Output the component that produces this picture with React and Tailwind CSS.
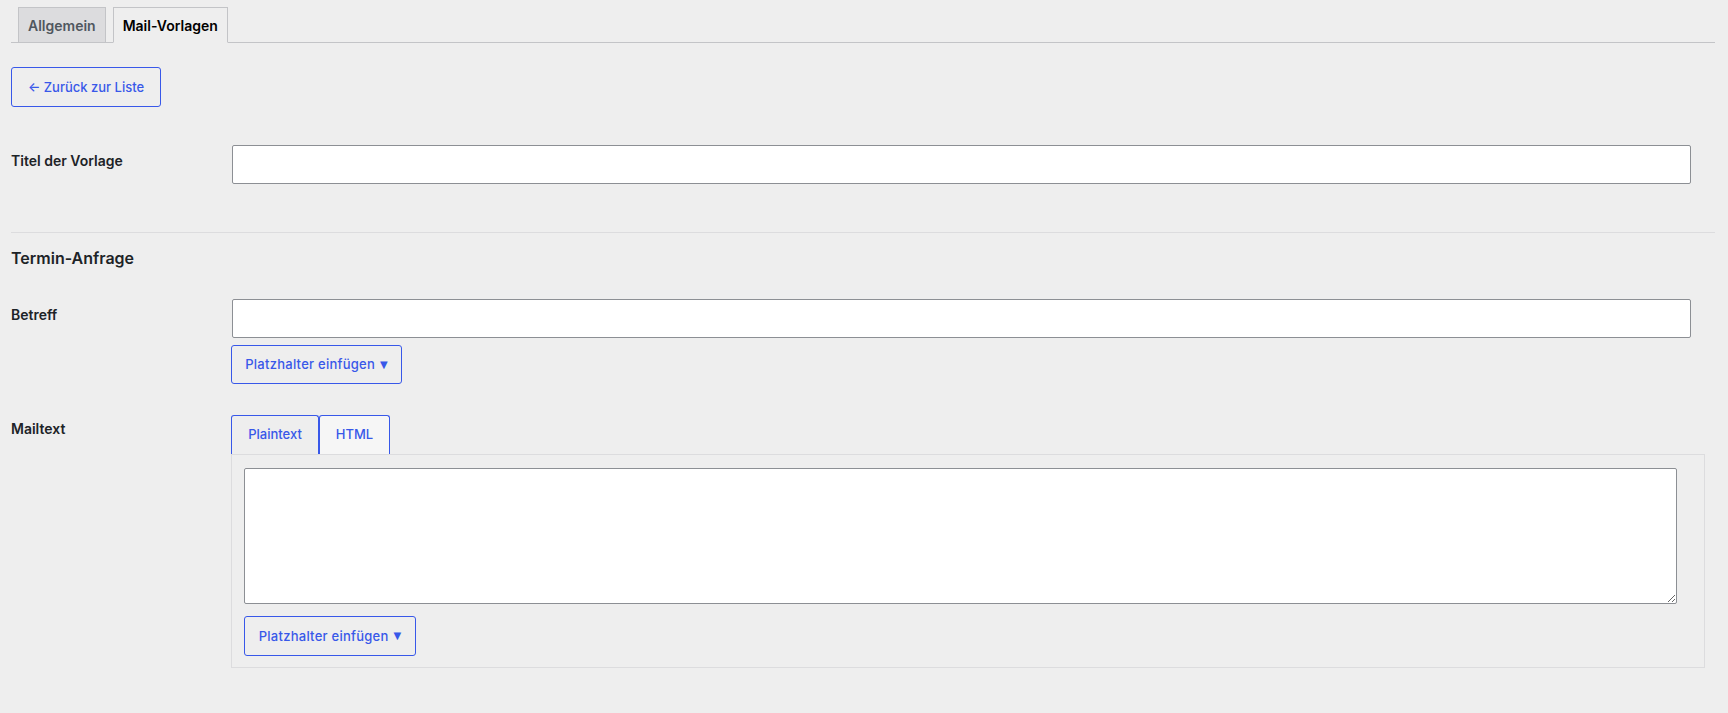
import React from "react";

const blueBtn =
  "flex items-center justify-center border border-[#3858e9] rounded-[3px] text-[#3858e9] text-[13px] font-medium leading-none";

function Row({ label, labelPt, children, className = "" }) {
  return (
    <div className={`flex ${className}`}>
      <div className={`w-[220px] shrink-0 text-[14px] font-semibold leading-[18px] text-[#1d2327] ${labelPt}`}>
        {label}
      </div>
      <div className="flex-1 min-w-0">{children}</div>
    </div>
  );
}

function Placeholder({ className }) {
  return (
    <div className={`${blueBtn} ${className}`}>
      <span className="tracking-[0.25px]">Platzhalter einfügen</span>
      <span className="ml-[5px] text-[10px] leading-none" style={{ fontFamily: "'DejaVu Sans', sans-serif" }}>▼</span>
    </div>
  );
}

export default function App() {
  return (
    <div
      className="min-h-[713px] bg-[#eeeeee] pl-[11px] pr-[13px] pt-[7px] text-[#1d2327]"
      style={{ fontFamily: "Inter, 'Noto Sans', sans-serif" }}
    >
      {/* nav tabs */}
      <div className="flex border-b border-[#c3c4c7]">
        <div className="ml-[7px] -mb-px h-[36px] px-[9px] flex items-center border border-[#c3c4c7] bg-[#dcdcde] text-[14px] font-semibold text-[#50575e]">
          Allgemein
        </div>
        <div className="ml-[7px] -mb-px h-[36px] px-[9px] flex items-center border border-[#c3c4c7] border-b-[#eeeeee] bg-[#eeeeee] text-[14px] font-semibold text-black">
          Mail-Vorlagen
        </div>
      </div>

      {/* back button */}
      <div className={`${blueBtn} mt-[24px] h-[40px] w-[150px]`}>← Zurück zur Liste</div>

      {/* title */}
      <Row label="Titel der Vorlage" labelPt="pt-[7px]" className="mt-[38px]">
        <input
          type="text"
          className="block h-[39px] ml-px mr-[24px] w-[calc(100%-25px)] bg-white border border-[#8c8f94] rounded-[2px] outline-none"
        />
      </Row>

      <div className="mt-[48px] h-px bg-[#dcdcde]" />

      <h2 className="mt-[13px] text-[16px] leading-[24px] font-semibold text-[#1d2327]">Termin-Anfrage</h2>

      {/* Betreff */}
      <Row label="Betreff" labelPt="pt-[7px]" className="mt-[29px]">
        <input
          type="text"
          className="block h-[39px] ml-px mr-[24px] w-[calc(100%-25px)] bg-white border border-[#8c8f94] rounded-[2px] outline-none"
        />
        <Placeholder className="mt-[7px] h-[39px] w-[171px]" />
      </Row>

      {/* Mailtext */}
      <Row label="Mailtext" labelPt="pt-[5px]" className="mt-[31px]">
        <div className="flex">
          <div className="h-[39px] w-[88px] flex items-center justify-center border border-b-0 border-[#3858e9] rounded-t-[3px] bg-[#eeeeee] text-[13px] font-medium text-[#3858e9]">
            Plaintext
          </div>
          <div className="h-[39px] w-[71px] flex items-center justify-center border border-b-0 border-[#3858e9] rounded-t-[3px] bg-[#f6f6f6] text-[13px] font-medium text-[#3858e9]">
            HTML
          </div>
        </div>
        <div className="mr-[10px] border border-[#dcdcde] bg-[#eeeeee] pt-[13px] pl-[12px] pr-[27px] pb-[11px]">
          <textarea className="block w-full h-[136px] bg-white border border-[#8c8f94] rounded-[2px] outline-none resize-y" />
          <Placeholder className="mt-[12px] h-[40px] w-[172px]" />
        </div>
      </Row>
    </div>
  );
}
